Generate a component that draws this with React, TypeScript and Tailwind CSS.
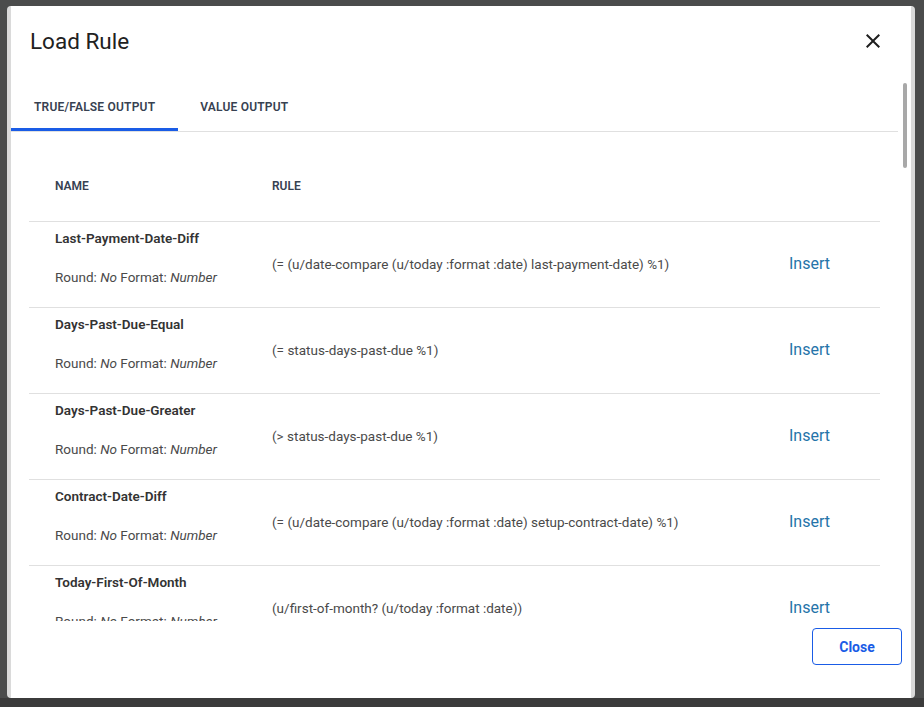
import React, { useState } from 'react';

type Rule = { name: string; rule: string };

const rules: Rule[] = [
  { name: 'Last-Payment-Date-Diff', rule: '(= (u/date-compare (u/today :format :date) last-payment-date) %1)' },
  { name: 'Days-Past-Due-Equal', rule: '(= status-days-past-due %1)' },
  { name: 'Days-Past-Due-Greater', rule: '(> status-days-past-due %1)' },
  { name: 'Contract-Date-Diff', rule: '(= (u/date-compare (u/today :format :date) setup-contract-date) %1)' },
  { name: 'Today-First-Of-Month', rule: '(u/first-of-month? (u/today :format :date))' },
  { name: 'Days-Past-Due-Less', rule: '(< status-days-past-due %1)' },
  { name: 'Days-Past-Due-Between', rule: '(<= %1 status-days-past-due %2)' },
  { name: 'Balance-Greater', rule: '(> current-balance %1)' },
  { name: 'Balance-Less', rule: '(< current-balance %1)' },
  { name: 'Balance-Equal', rule: '(= current-balance %1)' },
  { name: 'Payment-Amount-Greater', rule: '(> last-payment-amount %1)' },
  { name: 'Payment-Amount-Less', rule: '(< last-payment-amount %1)' },
  { name: 'Status-Equal', rule: '(= account-status %1)' },
  { name: 'Status-Not-Equal', rule: '(not= account-status %1)' },
  { name: 'State-Equal', rule: '(= borrower-state %1)' },
  { name: 'Promise-Date-Diff', rule: '(= (u/date-compare (u/today :format :date) promise-date) %1)' },
  { name: 'Next-Due-Date-Diff', rule: '(= (u/date-compare (u/today :format :date) next-due-date) %1)' },
  { name: 'Maturity-Date-Diff', rule: '(= (u/date-compare (u/today :format :date) maturity-date) %1)' },
  { name: 'Today-Last-Of-Month', rule: '(u/last-of-month? (u/today :format :date))' },
  { name: 'Today-Day-Of-Week', rule: '(= (u/day-of-week (u/today :format :date)) %1)' },
  { name: 'Today-Day-Of-Month', rule: '(= (u/day-of-month (u/today :format :date)) %1)' },
  { name: 'Open-Promise-Exists', rule: '(u/has-open-promise? account-id)' },
  { name: 'Autopay-Enabled', rule: '(= autopay-enabled true)' },
  { name: 'Bankruptcy-Flag', rule: '(= bankruptcy-flag true)' },
  { name: 'Cease-And-Desist', rule: '(= cease-and-desist true)' },
  { name: 'Phone-Consent', rule: '(= phone-consent true)' },
  { name: 'Email-Consent', rule: '(= email-consent true)' },
  { name: 'Language-Equal', rule: '(= preferred-language %1)' },
  { name: 'Product-Type-Equal', rule: '(= product-type %1)' },
  { name: 'Charge-Off-Flag', rule: '(= charged-off true)' },
  { name: 'Delinquent-Amount-Greater', rule: '(> delinquent-amount %1)' },
  { name: 'Last-Contact-Date-Diff', rule: '(= (u/date-compare (u/today :format :date) last-contact-date) %1)' },
  { name: 'Scheduled-Payment-Exists', rule: '(u/has-scheduled-payment? account-id)' },
];

// MUI-style close glyph
const CloseIcon = () => (
  <svg width="24" height="24" viewBox="0 0 24 24" fill="#1f1f1f" aria-hidden="true">
    <path d="M19 6.41 17.59 5 12 10.59 6.41 5 5 6.41 10.59 12 5 17.59 6.41 19 12 13.41 17.59 19 19 17.59 13.41 12z" />
  </svg>
);

const RuleRow: React.FC<{ item: Rule }> = ({ item }) => (
  <div className="grid grid-cols-[243px_517px_1fr] h-[86px] border-b border-[#e0e0e0]">
    <div className="pl-[26px] pt-[7px] flex flex-col gap-5">
      <div className="text-[13.5px] leading-[19px] font-semibold text-[#333333]">{item.name}</div>
      <div className="text-[13.5px] leading-[19px] text-[#4a4a4a]">
        Round: <i>No</i> Format: <i>Number</i>
      </div>
    </div>
    <div className="self-center text-[13.5px] leading-[19px] text-[#4a4a4a]">{item.rule}</div>
    <div className="self-center -mt-[2px]">
      <button className="text-base leading-5 text-[#2574a9]">Insert</button>
    </div>
  </div>
);

export default function App() {
  const [tab, setTab] = useState(0);

  return (
    <div className="relative w-[924px] h-[707px] overflow-hidden bg-[#4b4c4c] font-[Roboto,sans-serif]">
      {/* dimmed page underneath */}
      <div className="absolute left-0 right-0 bottom-0 h-[9px] bg-[#3b3b3b]" />

      {/* Dialog */}
      <div className="absolute left-[7px] top-[6px] w-[908px] h-[692px] rounded-[4px] bg-white border-x-4 border-[#dadada] flex flex-col overflow-hidden">
        {/* Header */}
        <div className="h-[77px] shrink-0 flex items-start justify-between pl-[19px] pr-[26px] pt-[19px]">
          <h2 className="text-[22.5px] leading-8 font-normal text-[#212121]">Load Rule</h2>
          <button className="h-8 flex items-center" aria-label="Close">
            <CloseIcon />
          </button>
        </div>

        {/* Scrollable body */}
        <div className="relative flex-1 min-h-0">
          <div className="h-full overflow-y-auto pr-[13px] [scrollbar-width:none]">
            {/* Tabs */}
            <div className="flex border-b border-[#e0e0e0]">
              {['TRUE/FALSE OUTPUT', 'VALUE OUTPUT'].map((label, i) => (
                <button
                  key={label}
                  onClick={() => setTab(i)}
                  className={
                    i === tab
                      ? 'h-12 px-[23px] pt-[3px] border-b-[3px] border-[#1a5ce6] text-xs font-semibold tracking-[0.2px] text-[#374151]'
                      : 'h-12 px-[22px] text-xs font-semibold tracking-[0.2px] text-[#374151]'
                  }
                >
                  {label}
                </button>
              ))}
            </div>

            {/* Table */}
            <div className="mx-[18px]">
              <div className="grid grid-cols-[243px_517px_1fr] pt-[46px] pb-[27px] border-b border-[#e0e0e0] text-xs leading-4 font-semibold text-[#374151]">
                <div className="pl-[26px]">NAME</div>
                <div>RULE</div>
                <div />
              </div>
              {rules.map((r) => (
                <RuleRow key={r.name} item={r} />
              ))}
            </div>
          </div>
          {/* scroll thumb */}
          <div className="absolute top-0 right-[4px] w-[4px] h-[85px] rounded-[2px] bg-[#a8a8a8]" />
        </div>

        {/* Footer */}
        <div className="h-[77px] shrink-0 flex justify-end items-start pt-[7px] pr-[9px]">
          <button className="w-[90px] h-[37px] rounded-[4px] border border-[#1a5ce6] text-sm font-bold text-[#1a5ce6]">
            Close
          </button>
        </div>
      </div>
    </div>
  );
}
